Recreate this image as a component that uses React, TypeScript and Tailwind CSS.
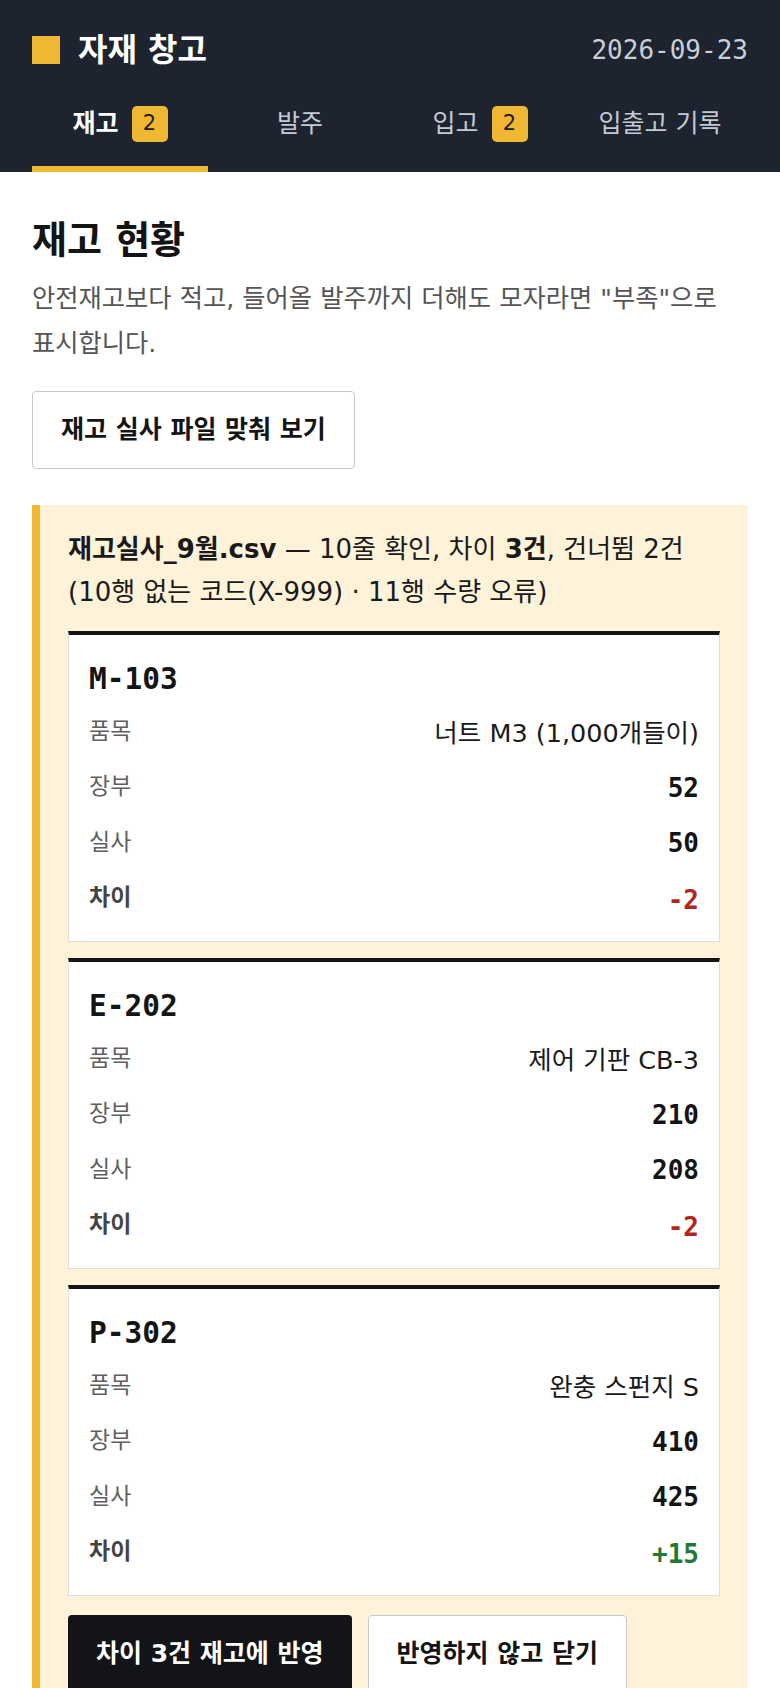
import React from "react";

const sans = { fontFamily: '"DejaVu Sans", "Noto Sans CJK KR", sans-serif' };

type Item = { code: string; name: string; book: number; real: number };

const items: Item[] = [
  { code: "M-103", name: "너트 M3 (1,000개들이)", book: 52, real: 50 },
  { code: "E-202", name: "제어 기판 CB-3", book: 210, real: 208 },
  { code: "P-302", name: "완충 스펀지 S", book: 410, real: 425 },
];

function Row({ label, children, bold }: { label: string; children: React.ReactNode; bold?: boolean }) {
  return (
    <div className="flex h-[55.5px] items-center justify-between">
      <span className={bold ? "text-[23px] font-bold text-[#444]" : "text-[23px] text-[#5f5f5f]"}>{label}</span>
      {children}
    </div>
  );
}

function Card({ it }: { it: Item }) {
  const diff = it.real - it.book;
  const diffText = diff > 0 ? `+${diff}` : `${diff}`;
  return (
    <div className="border-t-4 border-t-[#141414] border-x-[1.5px] border-b-[1.5px] border-x-[#dedede] border-b-[#dedede] bg-white px-[20px] pt-[23px] pb-[16px]">
      <div className="font-['DejaVu_Sans_Mono',monospace] text-[29.5px] font-bold leading-[42px] text-[#141414]">{it.code}</div>
      <div className="mt-[3px]">
        <Row label="품목">
          <span className="pt-[4px] text-[25.5px] text-[#1a1a1a]">{it.name}</span>
        </Row>
        <Row label="장부">
          <span className="pt-[4px] font-['DejaVu_Sans_Mono',monospace] text-[26px] font-bold text-[#141414]">{it.book}</span>
        </Row>
        <Row label="실사">
          <span className="pt-[4px] font-['DejaVu_Sans_Mono',monospace] text-[26px] font-bold text-[#141414]">{it.real}</span>
        </Row>
        <Row label="차이" bold>
          <span
            className={
              diff > 0
                ? "pt-[6px] font-['DejaVu_Sans_Mono',monospace] text-[26px] font-bold text-[#1f7a35]"
                : "pt-[6px] font-['DejaVu_Sans_Mono',monospace] text-[26px] font-bold text-[#b3261e]"
            }
          >
            {diffText}
          </span>
        </Row>
      </div>
    </div>
  );
}

function Tab({ label, badge, active }: { label: string; badge?: number; active?: boolean }) {
  return (
    <div
      className={
        active
          ? "flex h-[94px] items-center justify-center border-b-[6px] border-[#f0b733] pt-[4px]"
          : "flex h-[94px] items-center justify-center border-b-[6px] border-transparent pt-[4px]"
      }
    >
      <span className={active ? "text-[25px] font-bold text-white" : "text-[25px] text-[#c3cad3]"}>{label}</span>
      {badge !== undefined && (
        <span className="ml-[13px] flex h-[36px] min-w-[36px] items-center justify-center rounded-[5px] bg-[#f0b733] px-[8px] text-[21px] text-[#1a1a1a]">
          {badge}
        </span>
      )}
    </div>
  );
}

export default function App() {
  return (
    <div style={sans} className="min-h-[1688px] bg-white break-keep">
      <header className="bg-[#1d2430] px-8 pt-[22px]">
        <div className="flex h-[56px] items-center justify-between">
          <div className="flex items-center">
            <span className="block h-[28px] w-[28px] bg-[#f0b733]" />
            <span className="ml-[18px] text-[32px] font-bold text-white">자재 창고</span>
          </div>
          <span className="font-['DejaVu_Sans_Mono',monospace] text-[26px] text-[#c8cfd8]">2026-09-23</span>
        </div>
        <nav className="grid grid-cols-4 gap-1">
          <Tab label="재고" badge={2} active />
          <Tab label="발주" />
          <Tab label="입고" badge={2} />
          <Tab label="입출고 기록" />
        </nav>
      </header>

      <main className="px-8 pt-[43px]">
        <h1 className="text-[38px] font-bold leading-[50px] text-[#141414]">재고 현황</h1>
        <p className="mt-[11px] text-[25.3px] leading-[45px] text-[#555]">
          안전재고보다 적고, 들어올 발주까지 더해도 모자라면 "부족"으로 표시합니다.
        </p>
        <button className="mt-[25px] h-[78px] rounded-[4px] border-[1.5px] border-[#c8c8c8] bg-white px-[28px] text-[25px] font-bold text-[#141414]">
          재고 실사 파일 맞춰 보기
        </button>

        <section className="mt-[36px] border-l-[8px] border-[#f0b733] bg-[#fef3d8] px-[28px] pt-[23px] pb-[40px]">
          <p className="text-[26px] leading-[43px] text-[#1a1a1a]">
            <b className="font-bold">재고실사_9월.csv</b> — 10줄 확인, 차이 <b className="font-bold">3건</b>, 건너뜀 2건
            (10행 없는 코드(X-999) · 11행 수량 오류)
          </p>
          <div className="mt-[17px] flex flex-col gap-[16px]">
            {items.map((it) => (
              <Card key={it.code} it={it} />
            ))}
          </div>
          <div className="mt-[19px] flex gap-[16px]">
            <button className="h-[78px] rounded-[4px] bg-[#121417] px-[28px] text-[25px] font-bold text-white">
              차이 3건 재고에 반영
            </button>
            <button className="h-[78px] rounded-[4px] border-[1.5px] border-[#c8c8c8] bg-white px-[28px] text-[25px] font-bold text-[#141414]">
              반영하지 않고 닫기
            </button>
          </div>
        </section>
      </main>
    </div>
  );
}
